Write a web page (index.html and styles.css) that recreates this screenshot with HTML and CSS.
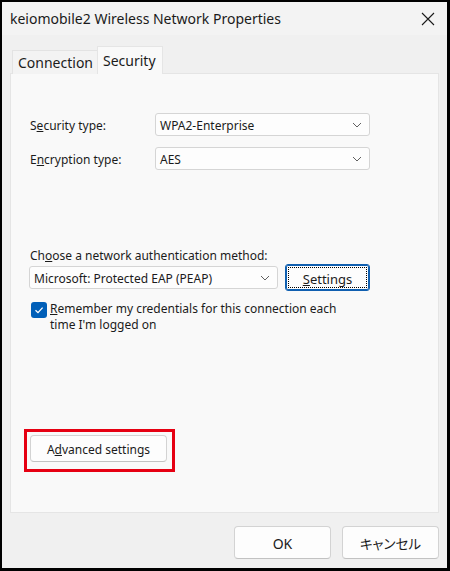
FILE: index.html
```html
<!DOCTYPE html>
<html lang="en">
<head>
<meta charset="utf-8">
<title>keiomobile2 Wireless Network Properties</title>
<link rel="stylesheet" href="styles.css">
</head>
<body>
<div class="window">
  <div class="titlebar">
    <span class="title">keiomobile2 Wireless Network Properties</span>
    <svg class="close" width="14" height="14" viewBox="0 0 14 14"><path d="M1 1 L13 13 M13 1 L1 13" stroke="#1a1a1a" stroke-width="1.1" fill="none"/></svg>
  </div>
  <div class="body">
    <div class="tabs">
      <div class="tab">Connection</div>
      <div class="tab active">Security</div>
    </div>
    <div class="panel">
      <div class="row">
        <span class="label">S<u>e</u>curity type:</span>
        <div class="select wide"><span>WPA2-Enterprise</span><svg class="chev" width="10" height="6" viewBox="0 0 10 6"><path d="M1 1 L5 5 L9 1" stroke="#606060" stroke-width="1" fill="none"/></svg></div>
      </div>
      <div class="row row2">
        <span class="label">E<u>n</u>cryption type:</span>
        <div class="select wide"><span>AES</span><svg class="chev" width="10" height="6" viewBox="0 0 10 6"><path d="M1 1 L5 5 L9 1" stroke="#606060" stroke-width="1" fill="none"/></svg></div>
      </div>
      <div class="auth-label">Ch<u>o</u>ose a network authentication method:</div>
      <div class="auth-row">
        <div class="select auth"><span>Microsoft: Protected EAP (PEAP)</span><svg class="chev" width="10" height="6" viewBox="0 0 10 6"><path d="M1 1 L5 5 L9 1" stroke="#606060" stroke-width="1" fill="none"/></svg></div>
        <button class="btn settings"><u>S</u>ettings</button>
      </div>
      <div class="check-row">
        <span class="checkbox"><svg width="16" height="16" viewBox="0 0 16 16"><path d="M4.5 8.2 L7 10.6 L11.6 5.6" stroke="#fff" stroke-width="1.3" fill="none"/></svg></span>
        <span class="check-text"><u>R</u>emember my credentials for this connection each<br>time I'm logged on</span>
      </div>
      <div class="highlight">
        <button class="btn advanced">A<u>d</u>vanced settings</button>
      </div>
    </div>
    <div class="footer">
      <button class="btn foot">OK</button>
      <button class="btn foot jp">キャンセル</button>
    </div>
  </div>
</div>
</body>
</html>
```

FILE: styles.css
```css
* { box-sizing: border-box; }
html, body { margin: 0; padding: 0; background: #000; }
body {
  font-family: "Noto Sans", "Noto Sans CJK JP", sans-serif;
  font-size: 12px;
  color: #1b1b1b;
}
.window {
  width: 450px;
  height: 571px;
  border-style: solid;
  border-color: #000;
  border-width: 2px 3px 3px 2px;
  background: #f0f0f0;
  display: flex;
  flex-direction: column;
}
.titlebar {
  height: 33px;
  background: #f3f3f3;
  display: flex;
  align-items: center;
  justify-content: space-between;
  padding: 0 12px 0 8px;
}
.title {
  font-size: 14px;
  color: #1a1a1a;
}
.close { display: block; }
.body {
  flex: 1;
  display: flex;
  flex-direction: column;
  padding: 12px 8px 0 8px;
}
.tabs {
  display: flex;
  align-items: flex-end;
  height: 27px;
  padding-left: 2px;
  position: relative;
  z-index: 1;
  margin-bottom: -1px;
}
.tab {
  height: 24px;
  border: 1px solid #e3e3e3;
  border-bottom: none;
  background: #f3f3f3;
  display: flex;
  align-items: center;
  font-size: 14px;
  width: 86px;
  padding-left: 5px;
}
.tab.active {
  height: 28px;
  width: 66px;
  background: #f9f9f9;
  border-color: #e5e5e5;
  padding-bottom: 1px;
  margin-left: -1px;
}
.panel {
  height: 440px;
  background: #f9f9f9;
  border: 1px solid #e5e5e5;
  padding: 39px 0 0 18px;
  display: flex;
  flex-direction: column;
}
.row {
  display: flex;
  align-items: center;
  height: 23px;
}
.row2 { margin-top: 11px; }
.label { width: 126px; padding-left: 1px; padding-top: 2px; }
.select {
  background: #fdfdfd;
  border: 1px solid #d5d5d5;
  border-radius: 3px;
  display: flex;
  align-items: center;
  justify-content: space-between;
  padding: 0 7px 0 4px;
}
.select span { padding-top: 2px; }
.select.wide { width: 215px; height: 23px; }
.chev { display: block; }
.auth-label {
  margin-top: 76px;
  line-height: 16px;
  padding-left: 1px;
  padding-top: 2px;
}
.auth-row {
  display: flex;
  align-items: center;
  height: 27px;
}
.select.auth { width: 249px; height: 23px; }
.btn {
  font-family: "Noto Sans", "Noto Sans CJK JP", sans-serif;
  font-size: 12px;
  color: #1b1b1b;
  background: #fdfdfd;
  border: 1px solid #d3d3d3;
  border-bottom-color: #c2c2c2;
  border-radius: 4px;
  padding: 2px 0 0;
  position: relative;
}
.settings {
  width: 85px;
  height: 27px;
  margin-left: 7px;
  font-size: 13px;
  border: 1px solid #0f5fb0;
  box-shadow: inset 0 0 0 1px #0f5fb0;
  border-radius: 3px;
}
.settings::after {
  content: "";
  position: absolute;
  inset: 2px;
  border: 1px dotted #000;
}
.check-row {
  display: flex;
  align-items: flex-start;
  margin-top: 9px;
}
.checkbox {
  width: 16px;
  height: 16px;
  margin: 2px 0 0 2px;
  background: #005fb8;
  border-radius: 3px;
  display: block;
}
.checkbox svg { display: block; }
.check-text {
  margin-left: 3px;
  line-height: 16px;
  padding-top: 1px;
}
.highlight {
  margin-top: 96px;
  margin-left: -5px;
  width: 151px;
  height: 43px;
  border: 3px solid #e60012;
  padding: 3px;
}
.advanced {
  width: 137px;
  height: 27px;
  display: block;
}
.footer {
  display: flex;
  justify-content: flex-end;
  gap: 11px;
  padding-top: 13px;
}
.foot {
  width: 97px;
  height: 33px;
  font-size: 14px;
  padding-top: 1px;
}
.foot.jp {
  font-size: 13.5px;
  font-feature-settings: "palt";
}
```
